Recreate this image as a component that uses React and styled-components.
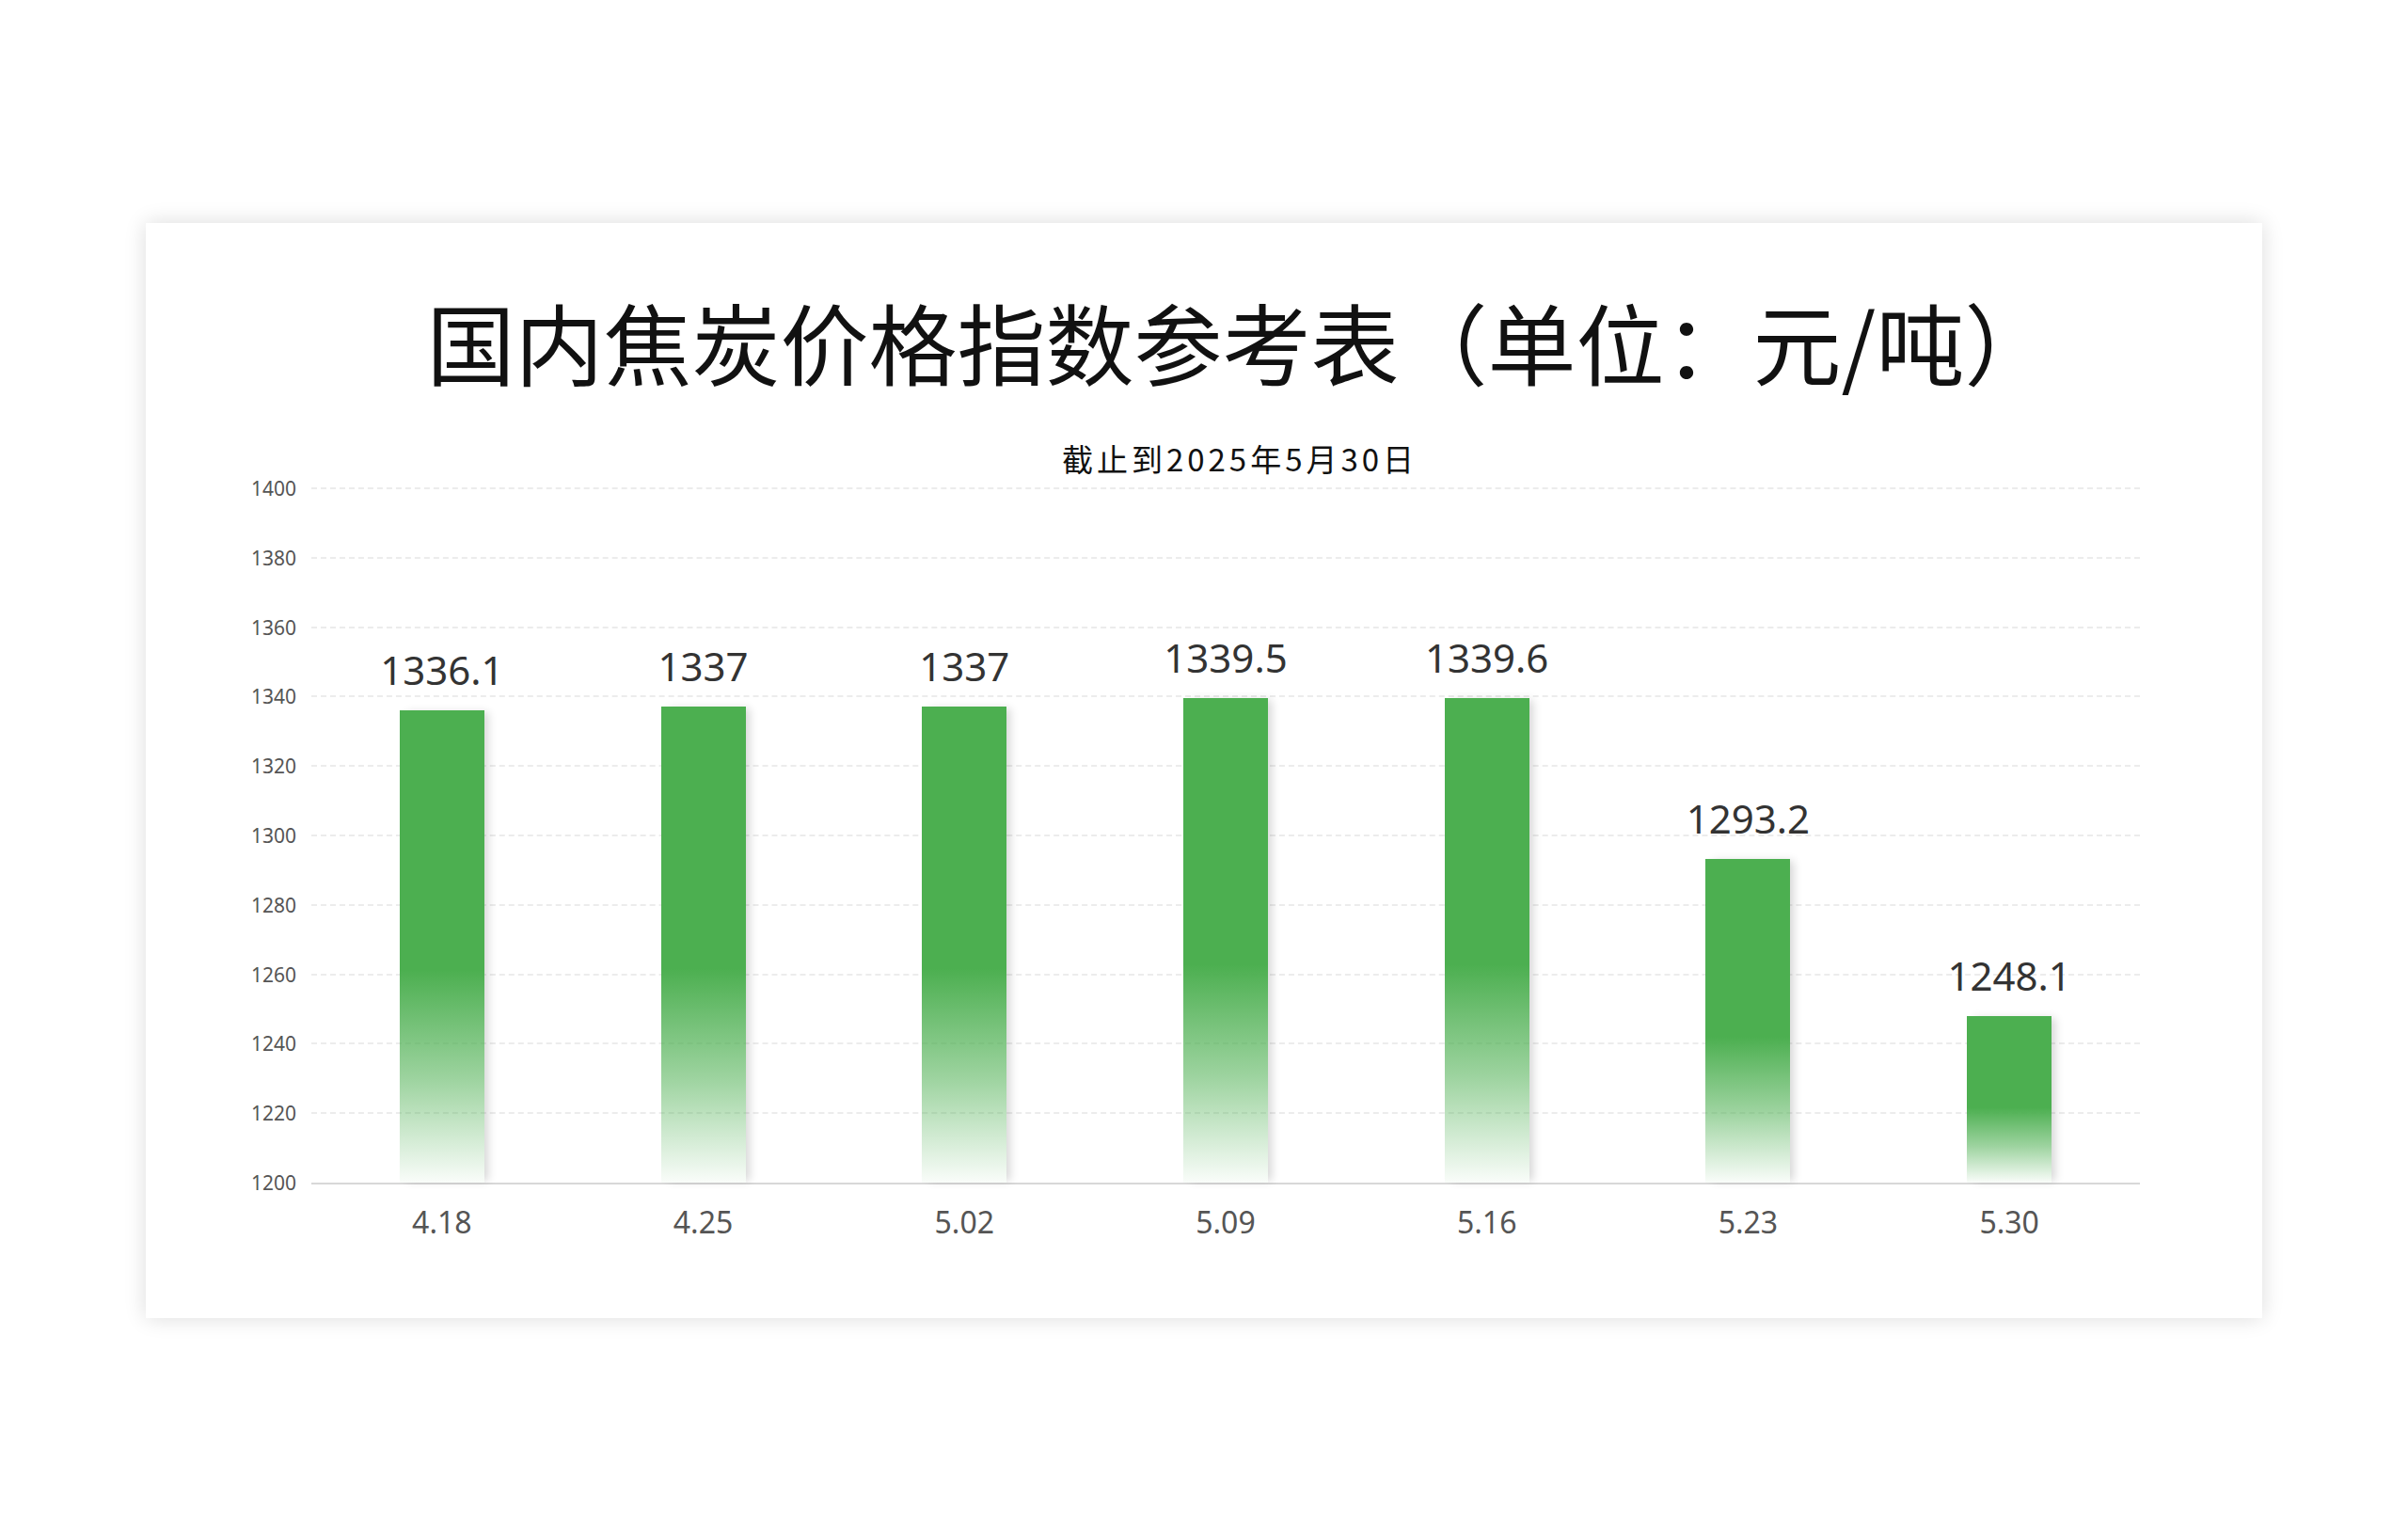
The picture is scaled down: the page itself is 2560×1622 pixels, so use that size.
import React from "react";
import styled, { createGlobalStyle } from "styled-components";

const Global = createGlobalStyle`
  html, body { margin: 0; padding: 0; background: #fff; }
  body { font-family: "Noto Sans", "Noto Sans CJK SC", sans-serif; }
`;

const data = [
  { d: "4.18", v: 1336.1 },
  { d: "4.25", v: 1337 },
  { d: "5.02", v: 1337 },
  { d: "5.09", v: 1339.5 },
  { d: "5.16", v: 1339.6 },
  { d: "5.23", v: 1293.2 },
  { d: "5.30", v: 1248.1 },
];
const ticks = [1400, 1380, 1360, 1340, 1320, 1300, 1280, 1260, 1240, 1220, 1200];
const MIN = 1200, MAX = 1400, H = 738;
const px = (v) => ((v - MIN) / (MAX - MIN)) * H;

const Page = styled.div`
  padding: 237px 0 0 155px;
  height: 1385px;
`;
const Card = styled.div`
  width: 2250px;
  height: 1164px;
  box-sizing: border-box;
  background: #fff;
  box-shadow: 0 0 22px rgba(0, 0, 0, 0.14);
  padding-top: 69px;
  display: flex;
  flex-direction: column;
`;
const Title = styled.h1`
  margin: 0;
  font-family: "Noto Sans CJK SC", sans-serif;
  font-weight: 400;
  font-size: 94px;
  line-height: 113px;
  color: #111;
  text-align: center;
  padding-left: 76px;
  white-space: nowrap;
`;
const Subtitle = styled.div`
  margin-top: 48px;
  font-family: "Noto Sans CJK SC", sans-serif;
  font-size: 33px;
  line-height: 40px;
  letter-spacing: 4px;
  color: #111;
  text-align: center;
  padding-left: 76px;
`;
const ChartRow = styled.div`
  margin-top: 12px;
  display: flex;
`;
const YAxis = styled.div`
  position: relative;
  width: 176px;
  height: ${H}px;
`;
const YLabel = styled.span`
  position: absolute;
  right: 16px;
  transform: translateY(-50%);
  font-size: 21px;
  color: #555;
`;
const PlotCol = styled.div`
  width: 1944px;
  display: flex;
  flex-direction: column;
`;
const Plot = styled.div`
  position: relative;
  height: ${H}px;
  border-bottom: 2px solid #d8d8d8;
  display: grid;
  grid-template-columns: repeat(7, 1fr);
  align-items: end;
`;
const GridLine = styled.div`
  position: absolute;
  left: 0;
  right: 0;
  border-top: 2px dashed #ececec;
`;
const Column = styled.div`
  position: relative;
  display: flex;
  flex-direction: column;
  align-items: center;
`;
const Value = styled.div`
  font-size: 42px;
  line-height: 50px;
  color: #333;
  margin-bottom: 18px;
`;
const Bar = styled.div`
  width: 90px;
  background: linear-gradient(
    to bottom,
    #4caf50 0%,
    #4caf50 55%,
    rgba(76, 175, 80, 0.55) 78%,
    rgba(76, 175, 80, 0.03) 100%
  );
  box-shadow: 6px 0 9px -2px rgba(0, 0, 0, 0.16);
`;
const XAxis = styled.div`
  display: grid;
  grid-template-columns: repeat(7, 1fr);
  margin-top: 18px;
`;
const XLabel = styled.div`
  text-align: center;
  font-size: 32px;
  line-height: 44px;
  color: #555;
`;

export default function App() {
  return (
    <Page>
      <Global />
      <Card>
        <Title>国内焦炭价格指数参考表（单位：元/吨）</Title>
        <Subtitle>截止到2025年5月30日</Subtitle>
        <ChartRow>
          <YAxis>
            {ticks.map((t) => (
              <YLabel key={t} style={{ top: H - px(t) }}>{t}</YLabel>
            ))}
          </YAxis>
          <PlotCol>
            <Plot>
              {ticks.slice(0, -1).map((t) => (
                <GridLine key={t} style={{ top: H - px(t) - 1 }} />
              ))}
              {data.map((p) => (
                <Column key={p.d}>
                  <Value>{p.v}</Value>
                  <Bar style={{ height: px(p.v) }} />
                </Column>
              ))}
            </Plot>
            <XAxis>
              {data.map((p) => (
                <XLabel key={p.d}>{p.d}</XLabel>
              ))}
            </XAxis>
          </PlotCol>
        </ChartRow>
      </Card>
    </Page>
  );
}
